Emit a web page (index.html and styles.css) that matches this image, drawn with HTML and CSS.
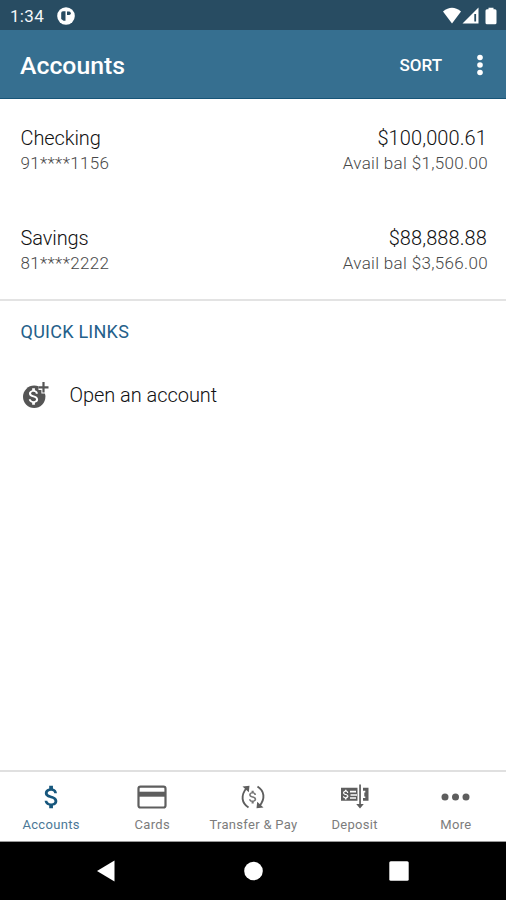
FILE: index.html
```html
<!DOCTYPE html>
<html lang="en">
<head>
<meta charset="utf-8">
<title>Accounts</title>
<link rel="stylesheet" href="styles.css">
</head>
<body>
<svg class="defs" width="0" height="0" aria-hidden="true">
  <symbol id="dollar" viewBox="0 0 24 24"><path d="M11.8 10.9c-2.27-.59-3-1.2-3-2.15 0-1.09 1.01-1.85 2.7-1.85 1.78 0 2.44.85 2.5 2.1h2.21c-.07-1.72-1.12-3.3-3.21-3.81V3h-3v2.16c-1.94.42-3.5 1.68-3.5 3.61 0 2.31 1.91 3.46 4.7 4.13 2.5.6 3 1.48 3 2.41 0 .69-.49 1.79-2.7 1.79-2.06 0-2.87-.92-2.98-2.1h-2.2c.12 2.19 1.76 3.42 3.68 3.83V21h3v-2.15c1.95-.37 3.5-1.5 3.5-3.55 0-2.84-2.43-3.81-4.7-4.4z"/></symbol>
</svg>
<div class="screen">
  <header class="status">
    <span class="clock">1:34</span>
    <svg class="badge" width="18" height="18" viewBox="0 0 18 18"><circle cx="9" cy="9" r="8.8" fill="#fff"/><path d="M4.200 6q0-1.800 1.800-1.800h2.500v9.600H6.500L4.200 12z" fill="#284c62"/><path d="M10 4.500h2.200q1.600 0 1.600 1.700t-1.600 1.700H10z" fill="#284c62"/></svg>
    <svg class="signals" width="56" height="18" viewBox="0 0 56 18" fill="#fff"><path d="M1 4.500Q10-3 19 4.500L10 16.500z"/><path fill-rule="evenodd" d="M36.500 .500v16H20.500zM32.300 7v7.500h1.800V7z"/><path d="M46.500 2.200v-1.500h5v1.500h1.500q1.500 0 1.500 1.500v12q0 1.500-1.500 1.500h-8q-1.500 0-1.500-1.500v-12q0-1.500 1.500-1.500z"/></svg>
  </header>
  <div class="appbar">
    <h1>Accounts</h1>
    <span class="sort">SORT</span>
    <svg class="menu" width="6" height="22" viewBox="0 0 6 22" fill="#fff"><circle cx="3" cy="3.500" r="2.800"/><circle cx="3" cy="11" r="2.800"/><circle cx="3" cy="18.500" r="2.800"/></svg>
  </div>
  <main>
    <section class="accounts">
      <div class="account">
        <div><div class="name">Checking</div><div class="sub number">91****1156</div></div>
        <div class="right"><div class="amount">$100,000.61</div><div class="sub">Avail bal $1,500.00</div></div>
      </div>
      <div class="account">
        <div><div class="name">Savings</div><div class="sub number">81****2222</div></div>
        <div class="right"><div class="amount">$88,888.88</div><div class="sub">Avail bal $3,566.00</div></div>
      </div>
    </section>
    <section class="links">
      <h2>QUICK LINKS</h2>
      <div class="link">
        <svg width="27" height="27" viewBox="0 0 27 27" fill="#555"><circle cx="11.200" cy="14.800" r="11.200"/><path d="M20.500 1v10.500M15.500 6h10" stroke="#fff" stroke-width="4.200"/><path d="M20.500 0v10.500M15.500 5.300h10" stroke="#555" stroke-width="2.200"/><use href="#dollar" x="0" y="3.500" width="22" height="22" fill="#fff"/></svg>
        <span>Open an account</span>
      </div>
    </section>
  </main>
  <nav class="tabs">
    <div class="tab active"><svg width="30" height="30"><use href="#dollar" x=".700" width="30" height="30"/></svg><span>Accounts</span></div>
    <div class="tab"><svg width="30" height="30" viewBox="0 0 30 30"><rect x="1.500" y="4.700" width="27" height="20.800" rx="2" fill="none" stroke="#5e5e5e" stroke-width="2.200"/><path d="M2 9.700h26.500v5H2z"/></svg><span>Cards</span></div>
    <div class="tab"><svg width="30" height="30" viewBox="0 0 30 30"><g fill="none" stroke="#5e5e5e" stroke-width="1.900"><path d="M10.500 25.500C3.500 21 2.500 13.500 8.500 6"/><path d="M19.500 4.500C26.500 9 27.500 16.500 21.500 24"/></g><path d="M4.500 4.500l7-.8-.7 6.600zM25.500 25.500l-7 .8.700-6.600z"/><use href="#dollar" x="6.500" y="6.500" width="17" height="17" opacity=".85"/></svg><span>Transfer &amp; Pay</span></div>
    <div class="tab"><svg width="30" height="30" viewBox="0 0 30 30"><path fill-rule="evenodd" d="M1 5.800h16.500v13H1zM10 8.800h6v1.700h-6zM10.500 12.200H17v1.500h-6.500zM10 15.200h6v1.500h-6z"/><path d="M23 5.800h5.500v13H23v-2.900h2.300v-1.500h-1v-4h1V8.800H23z"/><path d="M19.200 2.500h1.700V22h2.900L20 26.500 16.200 22h3z"/><use href="#dollar" x="-.5" y="6" width="13" height="13" fill="#fff"/></svg><span>Deposit</span></div>
    <div class="tab"><svg width="30" height="30" viewBox="0 0 30 30"><circle cx="4" cy="15" r="3.500"/><circle cx="14.500" cy="15" r="3.500"/><circle cx="25" cy="15" r="3.500"/></svg><span>More</span></div>
  </nav>
  <footer class="system">
    <svg width="20" height="22" viewBox="0 0 20 22"><path d="M1 11L18.500 .5v21z"/></svg>
    <svg width="20" height="20" viewBox="0 0 20 20"><circle cx="10.500" cy="10" r="9.300"/></svg>
    <svg width="20" height="20" viewBox="0 0 20 20"><rect x=".3" y=".3" width="19.400" height="19.400" rx="1.500"/></svg>
  </footer>
</div>
</body>
</html>
```

FILE: styles.css
```css
* { box-sizing: border-box; }
body { margin: 0; background: #fff; font-family: Roboto, "Liberation Sans", sans-serif; }
.defs { display: none; }
.screen { width: 506px; height: 900px; display: flex; flex-direction: column; overflow: hidden; }
h1, h2 { margin: 0; }
svg { display: block; flex: none; }

.status { height: 30px; flex: none; background: #284c62; display: flex; align-items: center; padding: 1px 8px 0 10px; color: #f4f7f9; }
.clock { font-size: 17px; letter-spacing: 0.3px; width: 47px; }
.signals { margin-left: auto; }

.appbar { height: 69px; flex: none; background: #366f90; border-bottom: 1px solid #175578; display: flex; align-items: center; padding: 2px 23px 0 20px; color: #fff; }
.appbar h1 { font-size: 24.8px; font-weight: 500; line-height: 30px; padding-top: 1px; }
.sort { margin-left: auto; font-size: 17px; font-weight: 500; }
.menu { margin-left: 35px; }

main { flex: 1; }
.accounts { height: 202px; border-bottom: 2px solid #e3e3e3; }
.account { height: 100px; display: flex; justify-content: space-between; padding: 27px 18px 0 20.5px; }
.right { text-align: right; }
.name, .amount { font-size: 20px; line-height: 25px; font-weight: 300; letter-spacing: -0.1px; color: #111; }
.amount { letter-spacing: 0.1px; padding-right: 1px; }
.sub { font-size: 17px; line-height: 25px; font-weight: 300; letter-spacing: 0.33px; color: #484848; }

.links { padding: 18px 20px 0 20.5px; }
.links h2 { font-size: 18px; line-height: 25px; font-weight: 400; letter-spacing: 0.25px; color: #24608a; }
.link { display: flex; align-items: center; margin-top: 37px; gap: 20px; padding-left: 2px; font-size: 20px; line-height: 28px; font-weight: 300; letter-spacing: -0.05px; color: #111; }

.tabs { height: 72px; flex: none; display: grid; grid-template-columns: repeat(5, 1fr); border-top: 2px solid #e0e0e0; border-bottom: 1px solid #999; }
.tab { display: flex; flex-direction: column; align-items: center; padding: 10px 0 0 1px; font-size: 13px; line-height: 16px; letter-spacing: 0.3px; color: #7c7c7c; fill: #5e5e5e; white-space: nowrap; }
.tab span { margin-top: 5px; }
.tab.active { color: #4b7896; fill: #17577d; }

.system { height: 58px; flex: none; background: #000; fill: #fff; display: flex; align-items: center; justify-content: space-between; padding: 0 97px 0 96px; }
```
